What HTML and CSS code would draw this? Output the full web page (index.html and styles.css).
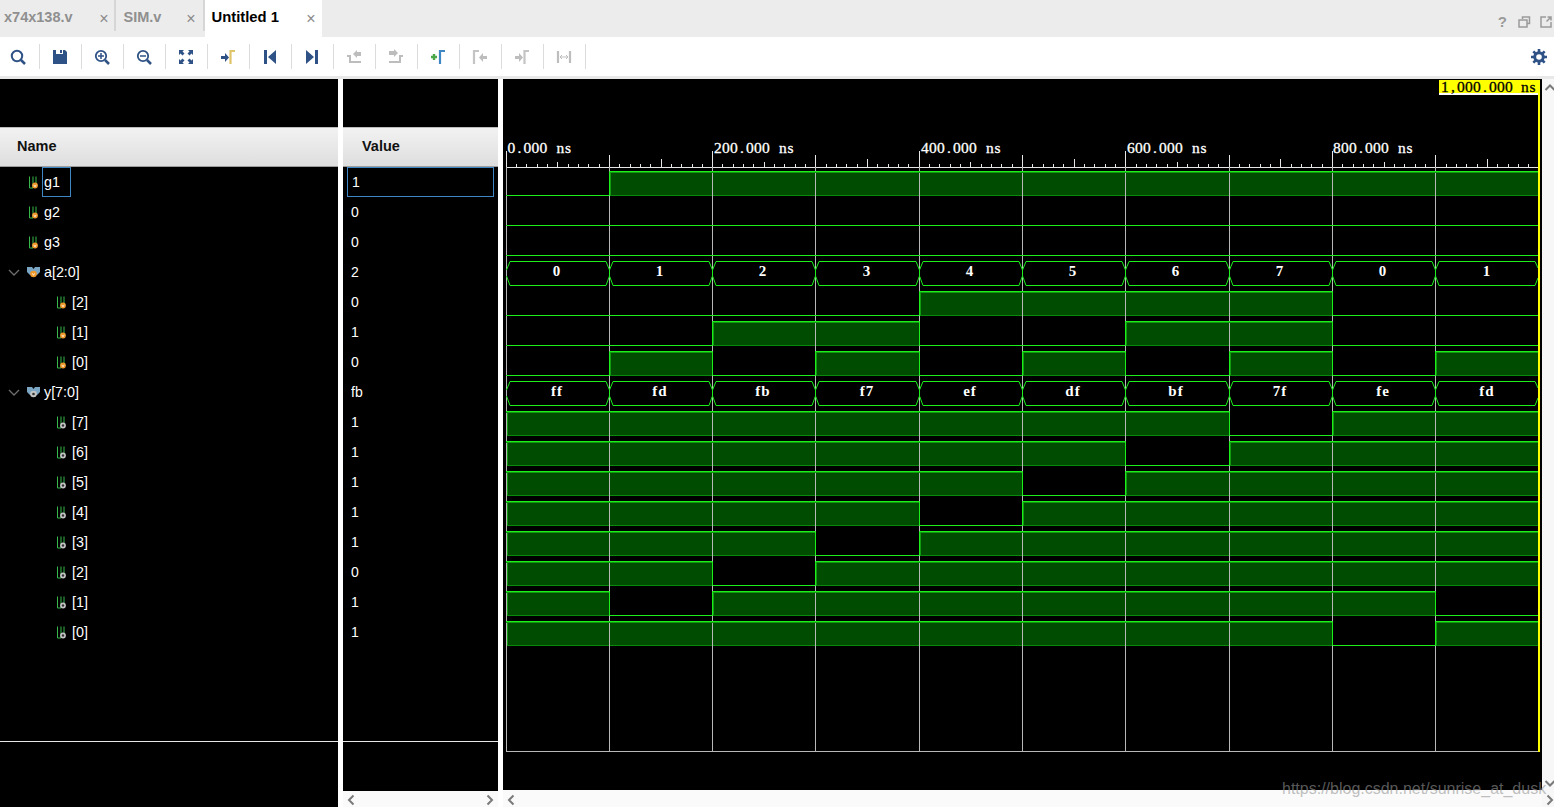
FILE: index.html
```html
<!DOCTYPE html>
<html lang="en">
<head>
<meta charset="utf-8">
<title>Untitled 1</title>
<link rel="stylesheet" href="styles.css">
</head>
<body>
<svg class="defs" width="0" height="0" aria-hidden="true">
  <defs>
    <path id="pin" d="M1.500 1.500V13H5V1.500M8 1.500V8" class="pin-wire"/>
    <g id="bit-in"><use href="#pin"/><circle cx="7" cy="10.500" r="2.900" fill="#f0982a"/><path d="M5.800 9.800l1.200 2 1.200-2" fill="none" stroke="#fff" stroke-width=".8"/></g>
    <g id="bit-out"><use href="#pin"/><circle cx="7" cy="10.500" r="2.900" fill="#c4c4c4"/><circle cx="7" cy="10.500" r="1.200" fill="#333"/></g>
    <g id="bus-in"><path d="M0 1h5l1.500 2 1.500-2h5v5l-3 3H3L0 6z" fill="#7aa6c4"/><circle cx="6.500" cy="8" r="3.300" fill="#f0982a"/><path d="M5.300 7.300l1.200 2 1.200-2" fill="none" stroke="#fff" stroke-width=".8"/></g>
    <g id="bus-out"><path d="M0 1h5l1.500 2 1.500-2h5v5l-3 3H3L0 6z" fill="#7aa6c4"/><circle cx="6.500" cy="8" r="3.300" fill="#c4c4c4"/><circle cx="6.500" cy="8" r="1.300" fill="#333"/></g>
    <path id="caret" d="M1 1l5 5 5-5" fill="none" stroke="#6e6e6e" stroke-width="1.300"/>
  </defs>
</svg>
<div class="app">
  <header class="tabs">
    <div class="tab"><span class="tab-name">x74x138.v</span><span class="tab-x">×</span></div>
    <div class="tab tab-sim"><span class="tab-name">SIM.v</span><span class="tab-x">×</span></div>
    <div class="tab tab-active"><span class="tab-name">Untitled 1</span><span class="tab-x">×</span></div>
    <div class="win-btns">
      <span class="help">?</span>
      <svg width="13" height="12" viewBox="0 0 13 12"><path d="M4.500 3V1h7v6.500H9M1 4h8v7H1z" fill="none" stroke="#9a9a9a" stroke-width="1.500"/></svg>
      <svg width="12" height="12" viewBox="0 0 12 12"><path d="M6 1H1v10h10V6M6.500 5.500L11 1M7.500 1H11v3.500" fill="none" stroke="#9a9a9a" stroke-width="1.500"/></svg>
    </div>
  </header>
  <nav class="toolbar">
    <button class="tool"><svg width="16" height="16" viewBox="0 0 16 16"><circle cx="7" cy="7" r="5.200" fill="none" stroke="#2f5286" stroke-width="2"/><path d="M11 11l4 4" stroke="#2f5286" stroke-width="2.500"/></svg></button>
    <button class="tool"><svg width="16" height="16" viewBox="0 0 16 16"><path d="M1 1h3v4h7V1h2l2 2v12H1z" fill="#2f5286"/><path d="M8 1h2v3H8z" fill="#2f5286"/></svg></button>
    <button class="tool"><svg width="16" height="16" viewBox="0 0 16 16"><circle cx="7" cy="7" r="5.200" fill="none" stroke="#2f5286" stroke-width="1.800"/><path d="M11 11l4 4" stroke="#2f5286" stroke-width="2.500"/><path d="M4 7h6M7 4v6" stroke="#2f5286" stroke-width="1.500"/></svg></button>
    <button class="tool"><svg width="16" height="16" viewBox="0 0 16 16"><circle cx="7" cy="7" r="5.200" fill="none" stroke="#2f5286" stroke-width="1.800"/><path d="M11 11l4 4" stroke="#2f5286" stroke-width="2.500"/><path d="M4 7h6" stroke="#2f5286" stroke-width="1.500"/></svg></button>
    <button class="tool"><svg width="16" height="16" viewBox="0 0 16 16"><g fill="#2f5286"><path d="M1 1h5L4.500 2.500l2 2-2 2-2-2L1 6zM15 1v5l-1.500-1.500-2 2-2-2 2-2L10 1zM1 15v-5l1.500 1.500 2-2 2 2-2 2L6 15zM15 15h-5l1.500-1.500-2-2 2-2 2 2L15 10z"/></g></svg></button>
    <button class="tool"><svg width="16" height="16" viewBox="0 0 16 16"><path d="M1 7h4V4l4 4.500L5 13v-3H1z" fill="#2f5286"/><path d="M10.500 15V2H15" fill="none" stroke="#e0c46a" stroke-width="2.200"/></svg></button>
    <button class="tool"><svg width="16" height="16" viewBox="0 0 16 16"><path d="M2 1h3v14H2zM14 1v14L6 8z" fill="#2f5286"/></svg></button>
    <button class="tool"><svg width="16" height="16" viewBox="0 0 16 16"><path d="M14 1h-3v14h3zM2 1v14l8-7z" fill="#2f5286"/></svg></button>
    <button class="tool"><svg width="16" height="16" viewBox="0 0 16 16"><path d="M1 6h4v6h10v2H3V8H1zM7 5l4-4v2h4v4h-4v2z" fill="#bdbdbd"/></svg></button>
    <button class="tool"><svg width="16" height="16" viewBox="0 0 16 16"><path d="M1 12h10V6h4v2h-2v6H1zM1 2h5V0l4 4-4 4V6H1z" fill="#bdbdbd"/></svg></button>
    <button class="tool"><svg width="16" height="16" viewBox="0 0 16 16"><path d="M1 8h6M4 5v6" stroke="#4aa84a" stroke-width="2.400"/><path d="M10 15V2h5" fill="none" stroke="#3f86c4" stroke-width="2.200"/></svg></button>
    <button class="tool"><svg width="16" height="16" viewBox="0 0 16 16"><path d="M2 15V2h5" fill="none" stroke="#c4c4c4" stroke-width="2.200"/><path d="M15 7h-4V4L7 8.500l4 4.500v-3h4z" fill="#bdbdbd"/></svg></button>
    <button class="tool"><svg width="16" height="16" viewBox="0 0 16 16"><path d="M1 7h4V4l4 4.500L5 13v-3H1z" fill="#bdbdbd"/><path d="M10.500 15V2H15" fill="none" stroke="#c4c4c4" stroke-width="2.200"/></svg></button>
    <button class="tool"><svg width="16" height="16" viewBox="0 0 16 16"><path d="M2 2v12M14 2v12" stroke="#bdbdbd" stroke-width="2.200"/><path d="M4 8h8M6 6L4 8l2 2M10 6l2 2-2 2" fill="none" stroke="#bdbdbd"/></svg></button>
    <svg class="gear" width="16" height="16" viewBox="0 0 16 16"><circle cx="8" cy="8" r="4.300" fill="none" stroke="#2f5286" stroke-width="3"/><path d="M8 0v16M0 8h16M2.300 2.300l11.400 11.400M13.700 2.300L2.300 13.700" stroke="#2f5286" stroke-width="2.600" stroke-dasharray="3 10 3 0"/></svg>
  </nav>
  <main class="viewer">
    <section class="names">
      <div class="top-black"></div>
      <div class="col-head col-head-name">Name</div>
      <ul class="rows">
        <li class="row"><svg class="ico in1"><use href="#bit-in"/></svg><span class="sel-name">g1</span></li>
        <li class="row"><svg class="ico in1"><use href="#bit-in"/></svg><span class="nm">g2</span></li>
        <li class="row"><svg class="ico in1"><use href="#bit-in"/></svg><span class="nm">g3</span></li>
        <li class="row"><svg class="caret"><use href="#caret"/></svg><svg class="ico bus"><use href="#bus-in"/></svg><span class="nm">a[2:0]</span></li>
        <li class="row"><svg class="ico in2"><use href="#bit-in"/></svg><span class="nm">[2]</span></li>
        <li class="row"><svg class="ico in2"><use href="#bit-in"/></svg><span class="nm">[1]</span></li>
        <li class="row"><svg class="ico in2"><use href="#bit-in"/></svg><span class="nm">[0]</span></li>
        <li class="row"><svg class="caret"><use href="#caret"/></svg><svg class="ico bus"><use href="#bus-out"/></svg><span class="nm">y[7:0]</span></li>
        <li class="row"><svg class="ico in2"><use href="#bit-out"/></svg><span class="nm">[7]</span></li>
        <li class="row"><svg class="ico in2"><use href="#bit-out"/></svg><span class="nm">[6]</span></li>
        <li class="row"><svg class="ico in2"><use href="#bit-out"/></svg><span class="nm">[5]</span></li>
        <li class="row"><svg class="ico in2"><use href="#bit-out"/></svg><span class="nm">[4]</span></li>
        <li class="row"><svg class="ico in2"><use href="#bit-out"/></svg><span class="nm">[3]</span></li>
        <li class="row"><svg class="ico in2"><use href="#bit-out"/></svg><span class="nm">[2]</span></li>
        <li class="row"><svg class="ico in2"><use href="#bit-out"/></svg><span class="nm">[1]</span></li>
        <li class="row"><svg class="ico in2"><use href="#bit-out"/></svg><span class="nm">[0]</span></li>
      </ul>
      <div class="end-rule"></div>
    </section>
    <section class="values">
      <div class="values-black">
        <div class="top-black"></div>
        <div class="col-head col-head-value">Value</div>
        <ul class="rows">
          <li class="row val sel-val">1</li>
          <li class="row val">0</li>
          <li class="row val">0</li>
          <li class="row val">2</li>
          <li class="row val">0</li>
          <li class="row val">1</li>
          <li class="row val">0</li>
          <li class="row val">fb</li>
          <li class="row val">1</li>
          <li class="row val">1</li>
          <li class="row val">1</li>
          <li class="row val">1</li>
          <li class="row val">1</li>
          <li class="row val">0</li>
          <li class="row val">1</li>
          <li class="row val">1</li>
        </ul>
        <div class="end-rule"></div>
      </div>
      <div class="hscroll">
        <svg width="10" height="12" viewBox="0 0 10 12"><path d="M7.500 1.500L3 6l4.500 4.500" class="chev"/></svg>
        <svg width="10" height="12" viewBox="0 0 10 12"><path d="M2.500 1.500L7 6l-4.500 4.500" class="chev"/></svg>
      </div>
    </section>
    <section class="wave">
      <svg class="wave-svg" width="1039" height="711" viewBox="503 79 1039 711">
        <!-- ruler -->
        <path class="ruler" d="M506.500 167.500H1538.500"/>
        <path class="ruler" d="M506.500 151V167M609.500 155V167M712.500 151V167M815.500 155V167M919.500 151V167M1022.500 155V167M1125.500 151V167M1229.500 155V167M1332.500 151V167M1435.500 155V167"/>
        <path class="ruler" d="M516.500 164V167M526.500 164V167M537.500 164V167M547.500 164V167M557.500 162V167M568.500 164V167M578.500 164V167M588.500 164V167M599.500 164V167M619.500 164V167M630.500 164V167M640.500 164V167M650.500 164V167M661.500 159V167M671.500 164V167M681.500 164V167M692.500 164V167M702.500 164V167M722.500 164V167M733.500 164V167M743.500 164V167M753.500 164V167M764.500 162V167M774.500 164V167M784.500 164V167M795.500 164V167M805.500 164V167M826.500 164V167M836.500 164V167M846.500 164V167M857.500 164V167M867.500 159V167M877.500 164V167M888.500 164V167M898.500 164V167M908.500 164V167M929.500 164V167M939.500 164V167M950.500 164V167M960.500 164V167M970.500 162V167M981.500 164V167M991.500 164V167M1001.500 164V167M1012.500 164V167M1032.500 164V167M1043.500 164V167M1053.500 164V167M1063.500 164V167M1074.500 159V167M1084.500 164V167M1094.500 164V167M1105.500 164V167M1115.500 164V167M1136.500 164V167M1146.500 164V167M1156.500 164V167M1167.500 164V167M1177.500 162V167M1187.500 164V167M1198.500 164V167M1208.500 164V167M1218.500 164V167M1239.500 164V167M1249.500 164V167M1260.500 164V167M1270.500 164V167M1280.500 159V167M1291.500 164V167M1301.500 164V167M1311.500 164V167M1322.500 164V167M1342.500 164V167M1353.500 164V167M1363.500 164V167M1373.500 164V167M1384.500 162V167M1394.500 164V167M1404.500 164V167M1415.500 164V167M1425.500 164V167M1446.500 164V167M1456.500 164V167M1466.500 164V167M1477.500 164V167M1487.500 159V167M1497.500 164V167M1508.500 164V167M1518.500 164V167M1528.500 164V167"/>
        <text class="tl" y="153" x="507.500 517.500 523.500 531.500 539.500 547.500 556.500 565">0.000 ns</text>
        <text class="tl" y="153" x="714 722 730 740 746 754 762 770 779 787.500">200.000 ns</text>
        <text class="tl" y="153" x="921 929 937 947 953 961 969 977 986 994.500">400.000 ns</text>
        <text class="tl" y="153" x="1127 1135 1143 1153 1159 1167 1175 1183 1192 1200.500">600.000 ns</text>
        <text class="tl" y="153" x="1333 1341 1349 1359 1365 1373 1381 1389 1398 1406.500">800.000 ns</text>

        <!-- high fills -->
        <path class="fill" d="M609 171h930v24H609zM919 291h413v24H919zM712 321h207v24H712zM1125 321h207v24h-207zM609 351h103v24H609zM815 351h104v24H815zM1022 351h103v24h-103zM1229 351h103v24h-103zM1435 351h104v24h-104zM506 411h723v24H506zM1332 411h207v24h-207zM506 441h619v24H506zM1229 441h310v24h-310zM506 471h516v24H506zM1125 471h414v24h-414zM506 501h413v24H506zM1022 501h517v24h-517zM506 531h309v24H506zM919 531h620v24H919zM506 561h206v24H506zM815 561h724v24H815zM506 591h103v24H506zM712 591h723v24H712zM506 621h826v24H506zM1435 621h104v24h-104z"/>
        <path class="dim" d="M609 195.500h930M919 315.500h413M712 345.500h207M1125 345.500h207M609 375.500h103M815 375.500h104M1022 375.500h103M1229 375.500h103M1435 375.500h104M506 435.500h723M1332 435.500h207M506 465.500h619M1229 465.500h310M506 495.500h516M1125 495.500h414M506 525.500h413M1022 525.500h517M506 555.500h309M919 555.500h620M506 585.500h206M815 585.500h724M506 615.500h103M712 615.500h723M506 645.500h826M1435 645.500h104"/>

        <!-- grid -->
        <path class="grid" d="M506.500 167V751.500H1538M609.500 167V751M712.500 167V751M815.500 167V751M919.500 167V751M1022.500 167V751M1125.500 167V751M1229.500 167V751M1332.500 167V751M1435.500 167V751"/>

        <!-- inner glow of high segments -->
        <path class="glow" d="M610 172.500H1538M919 292.500H1332M712 322.500H919M1125 322.500H1332M609 352.500H712M815 352.500H919M1022 352.500H1125M1229 352.500H1332M1435 352.500H1538M506 412.500H1229M1332 412.500H1538M506 442.500H1125M1229 442.500H1538M506 472.500H1022M1125 472.500H1538M506 502.500H919M1022 502.500H1538M506 532.500H815M919 532.500H1538M506 562.500H712M815 562.500H1538M506 592.500H609M712 592.500H1435M506 622.500H1332M1435 622.500H1538"/>
        <path class="glow" d="M610.500 172V195M920.500 292V315M713.500 322V345M1126.500 322V345M610.500 352V375M816.500 352V375M1023.500 352V375M1230.500 352V375M1436.500 352V375M1333.500 412V435M1230.500 442V465M1126.500 472V495M1023.500 502V525M920.500 532V555M816.500 562V585M713.500 592V615M1436.500 622V645M507.500 412V435M507.500 442V465M507.500 472V495M507.500 502V525M507.500 532V555M507.500 562V585M507.500 592V615M507.500 622V645"/>

        <!-- traces -->
        <path class="sig" d="M506 195.500H609.500V171.500H1538"/>
        <path class="sig" d="M506 225.500H1538M506 255.500H1538"/>
        <path class="sig" d="M506 315.500H919.500V291.500H1332.500V315.500H1538"/>
        <path class="sig" d="M506 345.500H712.500V321.500H919.500V345.500H1125.500V321.500H1332.500V345.500H1538"/>
        <path class="sig" d="M506 375.500H609.500V351.500H712.500V375.500H815.500V351.500H919.500V375.500H1022.500V351.500H1125.500V375.500H1229.500V351.500H1332.500V375.500H1435.500V351.500H1538"/>
        <path class="sig" d="M506 411.500H1229.500V435.500H1332.500V411.500H1538"/>
        <path class="sig" d="M506 441.500H1125.500V465.500H1229.500V441.500H1538"/>
        <path class="sig" d="M506 471.500H1022.500V495.500H1125.500V471.500H1538"/>
        <path class="sig" d="M506 501.500H919.500V525.500H1022.500V501.500H1538"/>
        <path class="sig" d="M506 531.500H815.500V555.500H919.500V531.500H1538"/>
        <path class="sig" d="M506 561.500H712.500V585.500H815.500V561.500H1538"/>
        <path class="sig" d="M506 591.500H609.500V615.500H712.500V591.500H1435.500V615.500H1538"/>
        <path class="sig" d="M506 621.500H1332.500V645.500H1435.500V621.500H1538"/>

        <!-- buses -->
        <path class="sig" d="M506.500 270L510 261.500H606L609.500 270V276L613 285.500H709L712.500 276V270L716 261.500H812L815.500 270V276L819 285.500H916L919.500 276V270L923 261.500H1019L1022.500 270V276L1026 285.500H1122L1125.500 276V270L1129 261.500H1226L1229.500 270V276L1233 285.500H1329L1332.500 276V270L1336 261.500H1432L1435.500 270V276L1439 285.500H1535L1538 278M506.500 276L510 285.500H606L609.500 276V270L613 261.500H709L712.500 270V276L716 285.500H812L815.500 276V270L819 261.500H916L919.500 270V276L923 285.500H1019L1022.500 276V270L1026 261.500H1122L1125.500 270V276L1129 285.500H1226L1229.500 276V270L1233 261.500H1329L1332.500 270V276L1336 285.500H1432L1435.500 276V270L1439 261.500H1535L1538 268"/>
        <path class="sig" d="M506.500 390L510 381.500H606L609.500 390V396L613 405.500H709L712.500 396V390L716 381.500H812L815.500 390V396L819 405.500H916L919.500 396V390L923 381.500H1019L1022.500 390V396L1026 405.500H1122L1125.500 396V390L1129 381.500H1226L1229.500 390V396L1233 405.500H1329L1332.500 396V390L1336 381.500H1432L1435.500 390V396L1439 405.500H1535L1538 398M506.500 396L510 405.500H606L609.500 396V390L613 381.500H709L712.500 390V396L716 405.500H812L815.500 396V390L819 381.500H916L919.500 390V396L923 405.500H1019L1022.500 396V390L1026 381.500H1122L1125.500 390V396L1129 405.500H1226L1229.500 396V390L1233 381.500H1329L1332.500 390V396L1336 405.500H1432L1435.500 396V390L1439 381.500H1535L1538 388"/>
        <g class="bv">
          <text x="557" y="276">0</text><text x="660" y="276">1</text><text x="763" y="276">2</text><text x="867" y="276">3</text><text x="970" y="276">4</text><text x="1073" y="276">5</text><text x="1176" y="276">6</text><text x="1280" y="276">7</text><text x="1383" y="276">0</text><text x="1487" y="276">1</text>
          <text x="557" y="396">ff</text><text x="660" y="396">fd</text><text x="763" y="396">fb</text><text x="867" y="396">f7</text><text x="970" y="396">ef</text><text x="1073" y="396">df</text><text x="1176" y="396">bf</text><text x="1280" y="396">7f</text><text x="1383" y="396">fe</text><text x="1487" y="396">fd</text>
        </g>
        <path class="cursor" d="M1539 80V752"/>
        <rect class="label-bg" x="1439" y="80" width="100" height="13"/>
        <rect class="label-foot" x="1439" y="93" width="99" height="2"/>
        <text class="cl" y="92" x="1441 1451 1457 1465 1473 1483 1489 1497 1505 1513 1521 1529.500">1,000.000 ns</text>
      </svg>
      <div class="hscroll hscroll-wave">
        <svg width="10" height="12" viewBox="0 0 10 12"><path d="M7.500 1.500L3 6l4.500 4.500" class="chev"/></svg>
      </div>
    </section>
    <aside class="vscroll">
      <svg width="12" height="10" viewBox="0 0 12 10"><path d="M1.500 7L6 2.500 10.500 7" class="chev"/></svg>
      <svg class="vs-down" width="12" height="10" viewBox="0 0 12 10"><path d="M1.500 3L6 7.500 10.500 3" class="chev"/></svg>
      <svg class="vs-right" width="12" height="12" viewBox="0 0 12 12"><path d="M3.500 1.500L8 6l-4.500 4.500" class="chev"/></svg>
    </aside>
    <div class="watermark">https://blog.csdn.net/sunrise_at_dusk</div>
  </main>
</div>
</body>
</html>
```
FILE: styles.css
```css
* { box-sizing: border-box; }
html, body { margin: 0; height: 100%; }
body {
  width: 1554px;
  height: 807px;
  overflow: hidden;
  background: #fff;
  font-family: "Liberation Sans", Arial, sans-serif;
  font-size: 14px;
}
.defs { display: block; height: 0; }
.app { display: flex; flex-direction: column; width: 1554px; height: 807px; }

/* Tabs */
.tabs { display: flex; height: 37px; background: #ececec; align-items: stretch; flex: none; }
.tab {
  position: relative;
  width: 115.500px;
  padding: 9px 0 0 4px;
  color: #8f8f8f;
  font-weight: bold;
  font-size: 14.500px;
  border-right: 2px solid #d6d6d6;
  height: 31px;
}
.tab-sim { width: 89px; padding-left: 8px; }
.tab-active { width: 117px; height: 37px; padding-left: 7px; background: #fff; color: #000; border: 0; font-size: 14.800px; }
.tab-x { position: absolute; right: 5px; top: 9px; color: #8a8a8a; font-size: 16px; font-weight: normal; line-height: 20px; }
.tab-sim .tab-x { right: 7px; }
.tab-active .tab-x { right: 6px; }
.win-btns { margin-left: auto; display: flex; align-items: center; gap: 9px; padding: 6px 2px 0 0; height: 37px; }
.help { color: #9a9a9a; font-weight: bold; font-size: 15px; margin-right: 2px; }

/* Toolbar */
.toolbar { display: flex; height: 39px; background: #fff; align-items: center; flex: none; }
.tool {
  width: 42px;
  height: 25px;
  padding: 0;
  border: 0;
  border-right: 1px solid #dcdcdc;
  background: none;
  display: flex;
  align-items: center;
  justify-content: center;
}
.tool:first-child { margin-left: -2px; }
.tool svg { margin-right: 1px; }
.gear { margin-left: auto; margin-right: 7px; }

/* Main */
.viewer { position: relative; display: flex; flex: 1; margin-top: 3px; gap: 5px; background: #fff; min-height: 0; box-shadow: 0 -3px 0 #e8e8e8; }
.names { width: 338px; background: #000; display: flex; flex-direction: column; position: relative; }
.values { width: 155px; display: flex; flex-direction: column; }
.values-black { flex: 1; background: #000; position: relative; display: flex; flex-direction: column; }
.top-black { height: 48px; flex: none; }
.col-head {
  height: 40px;
  flex: none;
  background: linear-gradient(#f2f2f2, #dedede);
  border-top: 1px solid #bcbcbc;
  border-bottom: 1px solid #9c9c9c;
  font-weight: bold;
  font-size: 14.500px;
  color: #111;
  display: flex;
  align-items: center;
  padding-bottom: 2px;
}
.col-head-name { padding-left: 17px; }
.col-head-value { padding-left: 19px; }
.rows { list-style: none; margin: 0; padding: 0; }
.row { position: relative; height: 30px; display: flex; align-items: center; color: #fff; font-size: 14px; }
.val { padding-left: 8px; }
.sel-val { margin-left: 4px; margin-right: 4px; padding-left: 4px; border: 1px solid #3f86c4; }
.sel-name { position: absolute; left: 42px; top: 0; width: 29px; height: 30px; border: 1px solid #3f86c4; padding-left: 1px; line-height: 28px; font-size: 14.300px; }
.nm { position: absolute; left: 0; font-size: 14.300px; }
.ico { position: absolute; width: 15px; height: 16px; top: 8px; }
.in1 { left: 28px; }
.in2 { left: 56px; }
.bus { left: 27px; top: 9px; }
.in1 + .nm { left: 44px; }
.bus + .nm { left: 44px; }
.in2 + .nm { left: 72px; }
.caret { position: absolute; left: 8px; top: 12px; width: 13px; height: 8px; }
.pin-wire { fill: none; stroke: #36b84a; stroke-width: 1; }
.end-rule { position: absolute; left: 0; right: 0; top: 662px; height: 1px; background: #e8e8e8; }

/* Scrollbars */
.hscroll { height: 16px; flex: none; background: #fafafa; display: flex; justify-content: space-between; align-items: center; padding: 2px 3px 0; }
.hscroll-wave { height: 17px; }
.chev { fill: none; stroke: #7a7a7a; stroke-width: 2; }
.vscroll { position: absolute; right: 0; top: 0; bottom: 0; width: 12px; background: #f7f7f7; overflow: hidden; display: flex; flex-direction: column; align-items: flex-start; padding: 4px 0 1px 2px; }
.vs-down { margin-top: auto; margin-bottom: 6px; }

/* Waveform */
.wave { width: 1039px; background: #000; flex: none; display: flex; flex-direction: column; }
.wave-svg { display: block; flex: none; }
.ruler { stroke: #e6e6e6; stroke-width: 1; fill: none; shape-rendering: crispEdges; }
.grid { stroke: #b8b8b8; stroke-width: 1; fill: none; shape-rendering: crispEdges; }
.sig { stroke: #1bf01b; stroke-width: 1; fill: none; }
.fill { fill: #004c00; }
.dim { stroke: #0a8a0a; stroke-width: 1; fill: none; }
.glow { stroke: #0f9a0f; stroke-width: 1; fill: none; }
.cursor { stroke: #ffff00; stroke-width: 2; fill: none; }
.label-bg { fill: #ffff00; }
.label-foot { fill: #fff; }
.tl { font-family: "Liberation Serif", serif; font-size: 15.500px; fill: #fff; stroke: #fff; stroke-width: .3px; }
.cl { font-family: "Liberation Serif", serif; font-size: 15.500px; fill: #000; stroke: #000; stroke-width: .3px; }
.bv { font-family: "Liberation Serif", serif; font-size: 15px; font-weight: bold; letter-spacing: 1px; fill: #fff; text-anchor: middle; }
.watermark {
  position: absolute;
  left: 1282px;
  top: 701px;
  color: rgba(150, 150, 150, .6);
  font-size: 16px;
  white-space: nowrap;
  line-height: 18px;
}
```
